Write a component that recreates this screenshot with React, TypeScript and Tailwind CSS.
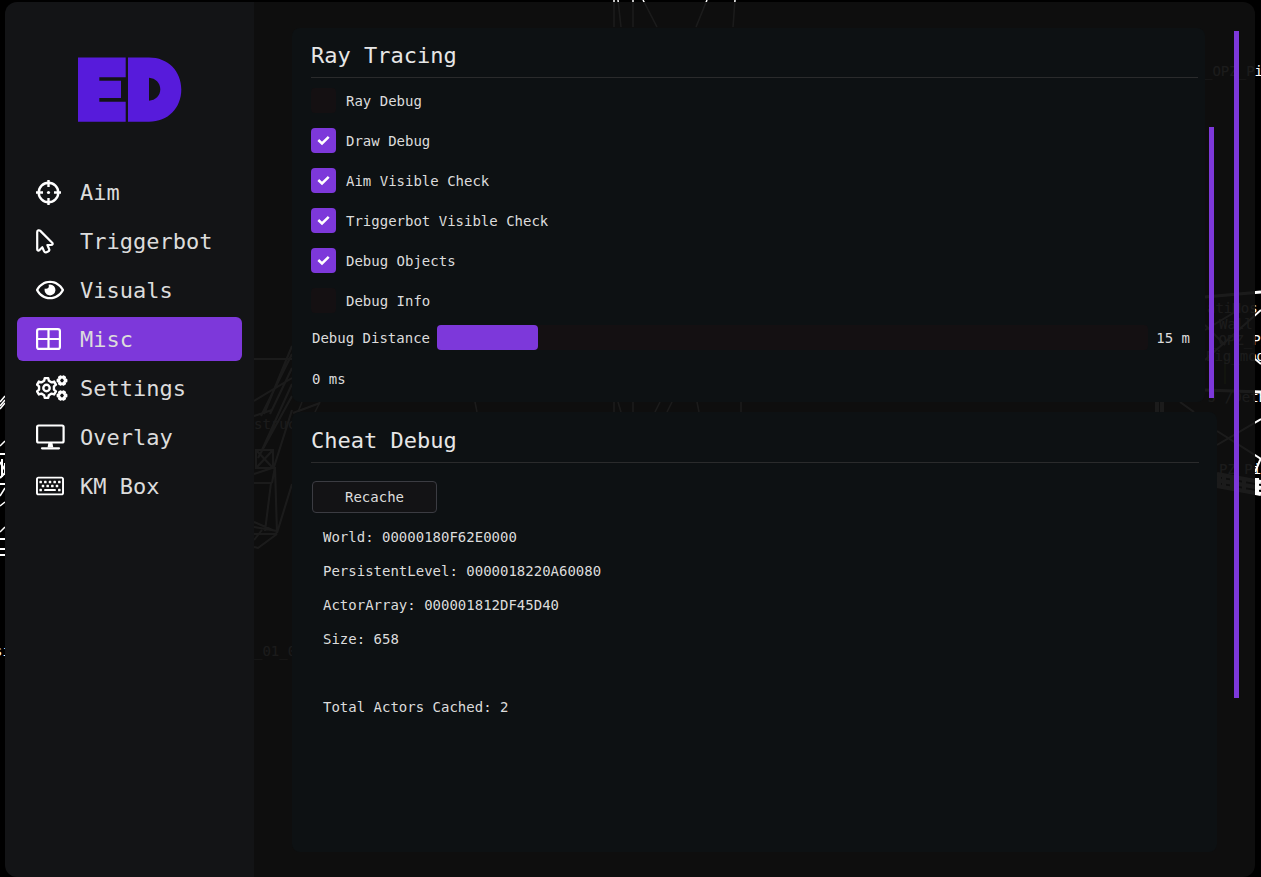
import { useState } from 'react'
import type { ReactNode } from 'react'
import { FaRegEye, FaRegKeyboard } from 'react-icons/fa'

const MONO = "font-['DejaVu_Sans_Mono','Liberation_Mono',monospace]"

function gearPath(cx: number, cy: number, teeth: number, outer: number, inner: number) {
  const step = (Math.PI * 2) / teeth
  const points: string[] = []
  for (let i = 0; i < teeth; i++) {
    const a = i * step
    const corners = [
      [a - step * 0.3, inner],
      [a - step * 0.17, outer],
      [a + step * 0.17, outer],
      [a + step * 0.3, inner],
    ]
    corners.forEach(([angle, r]) => {
      points.push(`${(cx + r * Math.cos(angle)).toFixed(2)} ${(cy + r * Math.sin(angle)).toFixed(2)}`)
    })
  }
  return `M${points.join('L')}Z`
}

function CrosshairIcon() {
  return (
    <svg width="25" height="25" viewBox="0 0 25 25" fill="none" stroke="currentColor" strokeWidth="2.4">
      <circle cx="12.5" cy="12.5" r="9.8" />
      <path d="M12.5 0v7M12.5 18v7M0 12.5h7M18 12.5h7" />
      <circle cx="12.5" cy="12.5" r="1.6" fill="currentColor" stroke="none" />
    </svg>
  )
}

function PointerIcon() {
  return (
    <svg width="18" height="25" viewBox="0 0 18 25" fill="none" stroke="currentColor" strokeWidth="2.2" strokeLinejoin="round">
      <path d="M1.2 3v17.300c0 1.300 1.300 1.700 2.100.9l3-3 1.700 3.900c.5 1.100 1.400 1.500 2.500 1.100l1.600-.7c1.100-.5 1.500-1.400 1-2.500l-1.700-4h3.700c1.500 0 2-1.300 1.100-2.200L4.300 1.900C3.100.7 1.200 1.300 1.200 3Z" />
    </svg>
  )
}

function GridIcon() {
  return (
    <svg width="25" height="22" viewBox="0 0 25 22" fill="none" stroke="currentColor" strokeWidth="2.2">
      <rect x="1.1" y="1.1" width="22.8" height="19.8" rx="2" />
      <path d="M12.5 1v20M1 11h23" />
    </svg>
  )
}

function GearsIcon() {
  return (
    <svg width="32" height="26" viewBox="0 0 32 26" fill="none" stroke="currentColor" strokeLinejoin="round">
      <path d={gearPath(10.5, 13, 6, 10, 7.6)} strokeWidth="2.400" transform="rotate(30 10.5 13)" />
      <circle cx="10.5" cy="13" r="3.200" strokeWidth="2.400" />
      <path d={gearPath(26, 5.500, 6, 4.200, 3)} strokeWidth="2.600" />
      <path d={gearPath(26, 20.500, 6, 4.200, 3)} strokeWidth="2.600" />
    </svg>
  )
}

function DesktopIcon() {
  return (
    <svg width="29" height="26" viewBox="0 0 29 26" fill="none" stroke="currentColor" strokeWidth="2.200">
      <rect x="1.100" y="1.500" width="26.500" height="17" rx="1.500" />
      <path d="M12.500 18.500h3.800l1 5h-5.800Z" fill="currentColor" stroke="none" />
      <path d="M6 24.300h17" strokeLinecap="round" />
    </svg>
  )
}

function Logo() {
  return (
    <svg width="104" height="65" viewBox="0 0 104 65" fill="#571bdb" role="img" aria-label="ED">
      <path d="M0 .5H47.7V20.3H21.3V23.7H43V41H21.3V44.7H47.7V64.7H0Z" />
      <path
        fillRule="evenodd"
        d="M50 .5H71C90 .5 103.3 14 103.3 32.5S90 64.7 71 64.7H50ZM71 20.7V43.7C77.5 43.2 82.3 38.5 82.3 32.2S77.5 21.2 71 20.7Z"
      />
    </svg>
  )
}

// wireframe of the scene that shows through behind the window
function SceneBackdrop() {
  return (
    <svg
      className="absolute inset-0 h-full w-full"
      viewBox="0 0 1261 877"
      preserveAspectRatio="xMidYMid slice"
      fill="none"
      stroke="#fff"
      strokeWidth="1.5"
      aria-hidden="true"
    >
      <path d="M614 0v27M618 0l3 27M633 0v27M643 0l14 27M707 0l-11 27M735 0l-2 27" />
      <path d="M614 402v10M618 402l3 10M633 402v10M660 402l-5 10M672 402l-5 10M697 402l2 10M741 402v10M475 402l2 10M302 402l-4 10M320 402l-5 10" />
      <path d="M254 359h38M292 346l-28 68M292 354l-31 62M292 368l-22 46M292 384l-30 66M292 396l-34 62M292 410l-18 57M254 401l38-23M254 416l18-6M293 413l27-10" strokeWidth="2" />
      <path d="M256 450h17v18h-17zM256 450l17 18M273 450l-17 18M254 474l21-7M275 467l2 66M254 483h18M272 483l3-16M271 483l-6 48M277 533l15-49M254 522l23 10M254 527l23 4M254 534h23M277 534l-19 14-4-1M254 540l8-10" strokeWidth="2" />
      <path d="M0 402l5-6M0 406l5-6M0 409l5-6M0 446l5-5M0 496l5-8M0 506l5-4M0 532l5-5" />
      <path d="M0 454h5M0 462l5 8M2 459v18M5 463v12M0 478l5-5M0 484h5M0 539h5M0 549h5M0 555h5" strokeWidth="2" />
      <path d="M1205 297l56-5M1205 390l56 2" strokeWidth="3" />
      <path d="M1205 330l30-18M1205 360l56-50M1255 359l6 5M1217 431l44 28M1217 445l44-26M1255 472l6-14M1180 402l14 10M1205 325l20 20" strokeWidth="2" />
      <path d="M1217 474l44 8M1217 480l44 8M1217 486l44 8M1219 474v14M1224 475v14M1232 476v14M1244 478v14M1257 478v16" strokeWidth="4" />
      <path d="M1157 402v10M1162 402v10" strokeWidth="4" />
      <path d="M1225 358v26" stroke="#4d7c0f" strokeWidth="2" />
      <g fill="#fff" stroke="none" fontFamily="'DejaVu Sans Mono', monospace" fontSize="14">
        <text x="1204" y="76">_OPZ_Pi</text>
        <text x="1207" y="313">atiMos</text>
        <text x="1219" y="329">Wall</text>
        <text x="1210" y="345">_OPZ_Pi</text>
        <text x="1206" y="361">Big_mod</text>
        <text x="1208" y="402">J /DetEd</text>
        <text x="1219" y="474">PZ_Pi</text>
        <text x="254" y="429">struc</text>
        <text x="254" y="656">_01_0</text>
        <text x="-6" y="656">si</text>
      </g>
    </svg>
  )
}

const navItems: { label: string; icon: ReactNode }[] = [
  { label: 'Aim', icon: <CrosshairIcon /> },
  { label: 'Triggerbot', icon: <PointerIcon /> },
  { label: 'Visuals', icon: <FaRegEye size={28} /> },
  { label: 'Misc', icon: <GridIcon /> },
  { label: 'Settings', icon: <GearsIcon /> },
  { label: 'Overlay', icon: <DesktopIcon /> },
  { label: 'KM Box', icon: <FaRegKeyboard size={28} /> },
]

function Sidebar() {
  const [active, setActive] = useState('Misc')

  return (
    <aside className="flex w-[249px] shrink-0 flex-col bg-[#131416] px-3 pt-[55px]">
      <div className="flex justify-center">
        <Logo />
      </div>
      <nav className="mt-12 flex flex-col gap-[5px]">
        {navItems.map((item) => (
          <button
            key={item.label}
            type="button"
            onClick={() => setActive(item.label)}
            className={`flex h-11 items-center rounded-md pl-[19px] text-[22px] leading-7 ${
              active === item.label ? 'bg-[#7d38da]' : ''
            }`}
          >
            <span className="flex w-11 shrink-0 items-center text-white">{item.icon}</span>
            <span className="pt-[2px]">{item.label}</span>
          </button>
        ))}
      </nav>
    </aside>
  )
}

function PanelTitle({ children }: { children: ReactNode }) {
  return (
    <h2 className="border-b border-[#2a2b2c] pb-[7px] text-[22px] leading-7 text-[#e6e6e6]">{children}</h2>
  )
}

function CheckRow({ label, initial }: { label: string; initial: boolean }) {
  const [checked, setChecked] = useState(initial)

  return (
    <label className="flex items-center gap-[10px] leading-[23px]">
      <span className="grid place-items-center">
        <input
          type="checkbox"
          checked={checked}
          onChange={(e) => setChecked(e.target.checked)}
          className="col-start-1 row-start-1 h-[25px] w-[25px] appearance-none rounded bg-[#141012] checked:bg-[#7d38da]"
        />
        {checked && (
          <svg
            className="pointer-events-none col-start-1 row-start-1"
            width="13"
            height="11"
            viewBox="0 0 13 11"
            fill="none"
            stroke="#fff"
            strokeWidth="2.5"
          >
            <path d="M1.3 5L5 8.5L11.7 1.8" />
          </svg>
        )}
      </span>
      <span className="pt-[2px]">{label}</span>
    </label>
  )
}

const rayOptions = [
  { label: 'Ray Debug', initial: false },
  { label: 'Draw Debug', initial: true },
  { label: 'Aim Visible Check', initial: true },
  { label: 'Triggerbot Visible Check', initial: true },
  { label: 'Debug Objects', initial: true },
  { label: 'Debug Info', initial: false },
]

const MIN_DISTANCE = 1
const MAX_DISTANCE = 100

function DistanceSlider() {
  const [distance, setDistance] = useState(15)
  const percent = ((distance - MIN_DISTANCE) / (MAX_DISTANCE - MIN_DISTANCE)) * 100

  return (
    <div className="mt-3 flex items-center pr-2 pl-px leading-[23px]">
      <label htmlFor="debug-distance" className="pt-[2px]">
        Debug Distance
      </label>
      <div className="relative ml-[7px] h-[25px] flex-1 rounded bg-[#141012]">
        <div className="h-full rounded bg-[#7d38da]" style={{ width: `${percent}%` }} />
        <input
          id="debug-distance"
          type="range"
          min={MIN_DISTANCE}
          max={MAX_DISTANCE}
          value={distance}
          onChange={(e) => setDistance(Number(e.target.value))}
          className="absolute inset-0 h-full w-full cursor-pointer opacity-0"
        />
      </div>
      <span className="ml-2 pt-[2px]">{distance} m</span>
    </div>
  )
}

function RayTracingPanel() {
  return (
    <div className="flex">
      <section className="min-w-0 flex-1 rounded-lg bg-[#0d1113] pt-[14px] pr-[7px] pb-[13px] pl-[19px]">
        <PanelTitle>Ray Tracing</PanelTitle>
        <div className="mt-[10px] flex flex-col items-start gap-[15px]">
          {rayOptions.map((option) => (
            <CheckRow key={option.label} label={option.label} initial={option.initial} />
          ))}
        </div>
        <DistanceSlider />
        <p className="mt-[19px] pl-px leading-5">0 ms</p>
      </section>
      <div className="mr-[3px] ml-1 flex w-[5px] flex-col pb-1">
        <div className="flex-[99]" />
        <div className="flex-[271] bg-[#7d38da]" />
      </div>
    </div>
  )
}

const cacheInfo = [
  'World: 00000180F62E0000',
  'PersistentLevel: 0000018220A60080',
  'ActorArray: 000001812DF45D40',
  'Size: 658',
]

function CheatDebugPanel() {
  return (
    <section className="flex-1 rounded-lg bg-[#0d1113] pt-[15px] pr-[18px] pl-[19px]">
      <PanelTitle>Cheat Debug</PanelTitle>
      <button
        type="button"
        className="mt-[18px] ml-px block h-8 w-[125px] rounded border border-[#3b3c42] bg-[#131315]"
      >
        Recache
      </button>
      <div className="mt-[7px] pl-3 leading-[34px]">
        {cacheInfo.map((line) => (
          <p key={line}>{line}</p>
        ))}
        <p className="mt-[34px]">Total Actors Cached: 2</p>
      </div>
    </section>
  )
}

export default function App() {
  return (
    <div
      className={`relative flex min-h-screen overflow-hidden bg-black pt-[2px] pr-[6px] pl-[5px] text-sm text-[#dcdcdc] ${MONO}`}
    >
      <SceneBackdrop />
      <div className="relative flex flex-1 overflow-hidden rounded-xl">
        <Sidebar />
        <main className="flex min-w-0 flex-1 bg-[#0f0f0f]/95 pt-[26px] pr-4 pb-[25px] pl-[38px]">
          <div className="flex min-w-0 flex-1 flex-col gap-[10px]">
            <RayTracingPanel />
            <CheatDebugPanel />
          </div>
          <div className="ml-[17px] flex w-[5px] flex-col pt-[3px]">
            <div className="flex-[667] bg-[#7d38da]" />
            <div className="flex-[154]" />
          </div>
        </main>
      </div>
    </div>
  )
}
